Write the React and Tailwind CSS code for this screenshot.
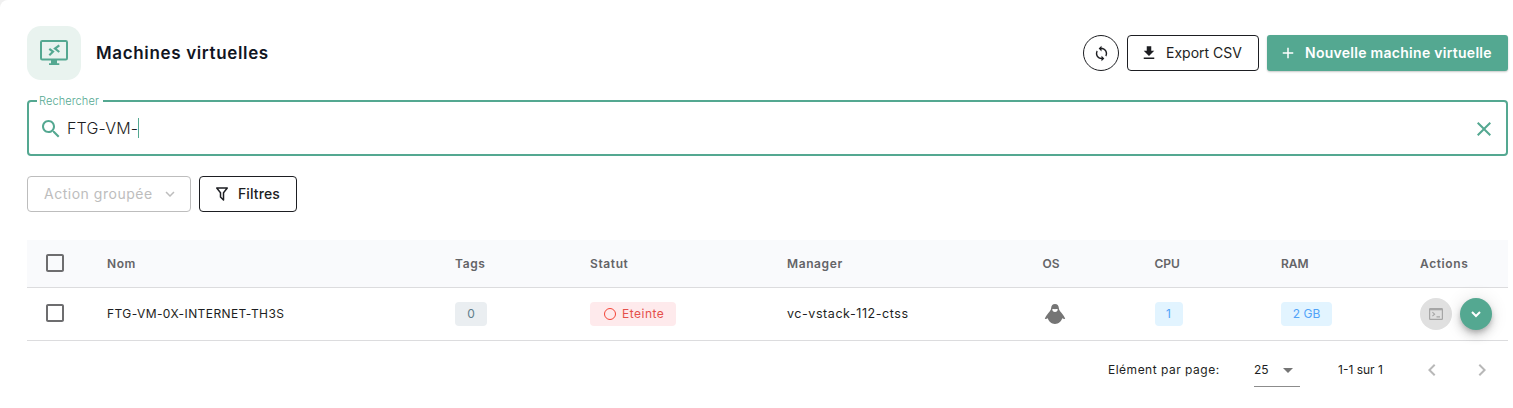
const PATHS = {
  sync: 'M12 4V1L8 5l4 4V6c3.31 0 6 2.69 6 6 0 1.01-.25 1.97-.7 2.8l1.46 1.46C19.54 15.03 20 13.57 20 12c0-4.42-3.58-8-8-8zm0 14c-3.31 0-6-2.69-6-6 0-1.01.25-1.97.7-2.8L5.24 7.74C4.46 8.97 4 10.43 4 12c0 4.42 3.58 8 8 8v3l4-4-4-4v3z',
  download: 'M5 20h14v-2H5v2zM19 9h-4V3H9v6H5l7 7 7-7z',
  plus: 'M19 13h-6v6h-2v-6H5v-2h6V5h2v6h6v2z',
  search: 'M15.5 14h-.79l-.28-.27C15.41 12.59 16 11.11 16 9.5 16 5.91 13.09 3 9.5 3S3 5.91 3 9.5 5.91 16 9.5 16c1.61 0 3.09-.59 4.23-1.57l.27.28v.79l5 4.99L20.49 19l-4.99-5zm-6 0C7.01 14 5 11.99 5 9.5S7.01 5 9.5 5 14 7.01 14 9.5 11.99 14 9.5 14z',
  close: 'M19 6.41L17.59 5 12 10.59 6.41 5 5 6.41 10.59 12 5 17.59 6.41 19 12 13.41 17.59 19 19 17.59 13.41 12z',
  box: 'M19 5v14H5V5h14m0-2H5c-1.1 0-2 .9-2 2v14c0 1.1.9 2 2 2h14c1.1 0 2-.9 2-2V5c0-1.1-.9-2-2-2z',
  down: 'M7.41 8.59L12 13.17l4.59-4.58L18 10l-6 6-6-6 1.41-1.41z',
  left: 'M15.41 7.41L14 6l-6 6 6 6 1.41-1.41L10.83 12z',
  right: 'M10 6L8.59 7.41 13.17 12l-4.58 4.59L10 18l6-6z',
  caret: 'M7 10l5 5 5-5z',
  filter: 'M15 19.88c.04.3-.06.62-.29.83a.996.996 0 0 1-1.41 0L9.29 16.7a.989.989 0 0 1-.29-.83v-5.12L4.21 4.62a1 1 0 0 1 .17-1.4c.19-.14.4-.22.62-.22h14c.22 0 .43.08.62.22a1 1 0 0 1 .17 1.4L15 10.75v9.13M7.04 5L11 10.06v5.52l2 2v-7.53L16.96 5H7.04z',
}

function Icon({ name, className }) {
  return (
    <svg viewBox="0 0 24 24" fill="currentColor" className={className}>
      <path d={PATHS[name]} />
    </svg>
  )
}

function RemoteDesktop() {
  return (
    <svg viewBox="0 0 30 26" className="h-[26px] w-[30px]" fill="none" stroke="currentColor">
      <rect x="2" y="1" width="26" height="18.500" rx="1.200" strokeWidth="2" />
      <path d="M12 20h6v3.200h2.300V25H10v-1.800h2z" fill="currentColor" stroke="none" />
      <path d="M10.300 8.800l3.700 2.900-3.700 3.500M20.300 5.400l-4.300 3.200 4.300 3.400" strokeWidth="2.200" />
    </svg>
  )
}

function Penguin() {
  return (
    <svg viewBox="0 0 22 22" className="h-[22px] w-[22px]" fill="#757575">
      <path
        fillRule="evenodd"
        d="M11 1C8.600 1 7.400 2.600 7.200 4.700 7 7 6.300 7.700 4.600 9.700 3 11.600 1.500 13.600.8 16c1.200.1 2.300-.1 3-.7C4.800 18.600 7.400 21 11 21s6.200-2.400 7.200-5.700c.7.600 1.800.8 3 .7-.7-2.400-2.200-4.400-3.800-6.300-1.700-2-2.400-2.700-2.600-5C14.600 2.600 13.400 1 11 1zM8.200 6.200c1-.3 1.800-.3 2.800 0 1-.3 1.800-.3 2.800 0 0 1.600-1.200 2.700-2.800 2.700S8.200 7.800 8.200 6.200z"
      />
    </svg>
  )
}

const COLS =
  'grid grid-cols-[80px_348px_135px_197px_255.5px_112px_126.5px_139px_88px] items-center'

const OUTLINED = 'flex h-9 items-center rounded border text-[14px]'

export default function App() {
  return (
    <div className="h-[408px] bg-[#f0f0f0] font-['Inter',sans-serif] text-[#1d1e22]">
      <main className="h-full rounded-tl-[8px] bg-white pt-[26px] pr-[5px] pl-[27px]">
        <header className="flex h-[54px] items-center">
          <div className="flex size-[54px] items-center justify-center rounded-[14px] bg-[#e9f3ef] text-[#54a891]">
            <RemoteDesktop />
          </div>
          <h1 className="mt-0.5 ml-[15px] text-[17px] font-semibold tracking-[0.65px] text-[#11151f]">
            Machines virtuelles
          </h1>
          <div className="ml-auto flex gap-2">
            <button className="flex size-9 items-center justify-center rounded-full border border-[#1d1e22]">
              <Icon name="sync" className="size-[17px]" />
            </button>
            <button className={`${OUTLINED} w-[132px] border-[#1d1e22] pl-3`}>
              <Icon name="download" className="size-[18px]" />
              <span className="-mt-px ml-2 whitespace-nowrap">Export CSV</span>
            </button>
            <button className="flex h-9 w-[241px] items-center rounded-[3px] bg-[#54a891] pl-3 text-[14px] font-semibold text-white shadow-[0_1px_2px_rgba(0,0,0,0.22)]">
              <Icon name="plus" className="size-[18px]" />
              <span className="-mt-px ml-2 tracking-[0.28px] whitespace-nowrap">
                Nouvelle machine virtuelle
              </span>
            </button>
          </div>
        </header>

        <section className="relative mt-5 flex h-14 items-center rounded border-2 border-[#54a891] pr-[10px] pl-[10px]">
          <span className="absolute -top-[8px] left-[8px] bg-white pr-1 pl-[2px] text-[11px] leading-[14px] font-light tracking-[0.1px] text-[#54a891]">
            Rechercher
          </span>
          <Icon name="search" className="mt-px size-6 text-[#54a891]" />
          <span className="-mt-px ml-1 text-[16px] leading-5 font-light tracking-[0.2px]">FTG-VM-</span>
          <span className="h-5 w-px bg-[#54a891]" />
          <Icon name="close" className="mt-0.5 ml-auto size-6 text-[#54a891]" />
        </section>

        <div className="mt-5 flex gap-2">
          <button className={`${OUTLINED} w-[164px] border-[#bdbdbd] pl-4 text-[#bdbdbd]`}>
            <span className="-mt-px tracking-[0.52px] whitespace-nowrap">Action groupée</span>
            <Icon name="down" className="mr-[11px] ml-auto size-[18px]" />
          </button>
          <button className={`${OUTLINED} w-[98px] border-[#1d1e22] pl-[13px] font-medium`}>
            <Icon name="filter" className="size-[18px]" />
            <span className="-mt-px ml-[7px] tracking-[0.1px]">Filtres</span>
          </button>
        </div>

        <section className="mt-7">
          <div
            className={`${COLS} h-12 border-b border-[#dcdcde] bg-[#f9fafc] text-[12px] font-semibold tracking-[0.6px] text-[#646467]`}
          >
            <Icon name="box" className="-mt-0.5 ml-4 size-6 text-[#6d6d6f]" />
            <span>Nom</span>
            <span>Tags</span>
            <span>Statut</span>
            <span>Manager</span>
            <span className="tracking-normal">OS</span>
            <span className="tracking-normal">CPU</span>
            <span className="tracking-normal">RAM</span>
            <span>Actions</span>
          </div>
          <div className={`${COLS} h-[53px] border-b border-[#dcdcde] text-[12px]`}>
            <Icon name="box" className="-mt-0.5 ml-4 size-6 text-[#6d6d6f]" />
            <span className="tracking-[0.41px]">FTG-VM-0X-INTERNET-TH3S</span>
            <span className="flex h-6 w-8 items-center justify-center rounded bg-[#eaeef1] text-[#607d8b]">0</span>
            <span className="flex h-6 w-[86px] items-center rounded bg-[#feeaec] pl-[14px] text-[#e5504b]">
              <span className="size-3 rounded-full border-[1.5px] border-[#f44336]" />
              <span className="ml-[6px] tracking-[0.5px]">Eteinte</span>
            </span>
            <span className="text-[12.5px] tracking-[0.56px]">vc-vstack-112-ctss</span>
            <span className="pl-px">
              <Penguin />
            </span>
            <span className="flex h-6 w-7 items-center justify-center rounded bg-[#e2f4ff] text-[#51a3f8]">1</span>
            <span className="flex h-6 w-[51px] items-center justify-center rounded bg-[#e2f4ff] text-[#51a3f8]">2 GB</span>
            <span className="flex gap-2">
              <button className="flex size-8 items-center justify-center rounded-full bg-[#e0e0e0] text-[#a6a6a6]">
                <svg viewBox="0 0 14 12" className="h-3 w-[14px]" fill="none" stroke="currentColor">
                  <rect x=".6" y=".6" width="12.800" height="10.800" rx=".6" strokeWidth="1.200" />
                  <path d="M1 1.500h12" strokeWidth="1.600" />
                  <path d="M3.400 4.200l2.200 2-2.200 2M7.500 8.900h3.500" strokeWidth="1.100" />
                </svg>
              </button>
              <button className="flex size-8 items-center justify-center rounded-full bg-[#54a891] text-white shadow-[0_3px_5px_-1px_rgba(0,0,0,0.2),0_6px_10px_rgba(0,0,0,0.14),0_1px_18px_rgba(0,0,0,0.12)]">
                <svg viewBox="0 0 12 12" className="size-3" fill="none" stroke="currentColor" strokeWidth="2">
                  <path d="M2 4l4 4 4-4" />
                </svg>
              </button>
            </span>
          </div>
        </section>

        <footer className="flex h-[58px] items-center pl-[1081px] text-[12px]">
          <span className="w-[146px] tracking-[0.5px] whitespace-nowrap">Elément par page:</span>
          <div className="mt-[1px] flex h-[33px] w-[46px] items-center justify-between border-b border-[#8c8c8c]">
            <span>25</span>
            <Icon name="caret" className="size-6 text-[#757575]" />
          </div>
          <span className="ml-[38px] w-[82px] whitespace-nowrap">1-1 sur 1</span>
          <Icon name="left" className="size-6 text-[#b8b8b8]" />
          <Icon name="right" className="ml-[26px] size-6 text-[#b8b8b8]" />
        </footer>
      </main>
    </div>
  )
}
